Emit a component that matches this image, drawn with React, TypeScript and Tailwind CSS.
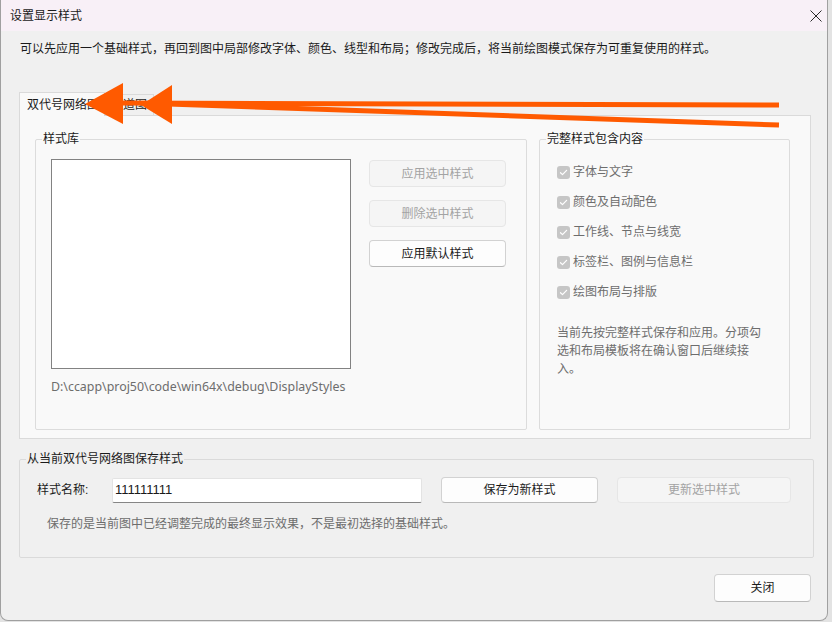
import clsx from 'clsx';

type BtnProps = {
  label: string;
  disabled?: boolean;
  className?: string;
};

function WinButton({ label, disabled, className }: BtnProps) {
  return (
    <button
      type="button"
      disabled={disabled}
      className={clsx(
        'flex shrink-0 items-center justify-center rounded-[4px] border text-[12px] leading-none',
        disabled
          ? 'border-[#e6e6e6] bg-[#f5f5f5] text-[#a3a3a3]'
          : 'border-[#d2d2d2] border-b-[#b9b9b9] bg-[#fdfdfd] text-[#1b1b1b]',
        className,
      )}
    >
      {label}
    </button>
  );
}

function CheckRow({ label }: { label: string }) {
  return (
    <div className="flex h-[30px] items-center gap-[3px]">
      <span className="flex h-[13px] w-[13px] items-center justify-center rounded-[3px] bg-[#c6c6c6]">
        <svg width="9" height="9" viewBox="0 0 9 9" fill="none">
          <path d="M1.5 4.7 3.5 6.6 7.6 2.3" stroke="#ffffff" strokeWidth="1.2" strokeLinecap="round" strokeLinejoin="round" />
        </svg>
      </span>
      <span className="text-[12px] leading-[16px] text-[#6d6d6d]">{label}</span>
    </div>
  );
}

const checks = ['字体与文字', '颜色及自动配色', '工作线、节点与线宽', '标签栏、图例与信息栏', '绘图布局与排版'];

export default function App() {
  return (
    <div className="relative h-[622px] w-[832px] overflow-hidden bg-[#e3e3e3] font-['Liberation_Sans','Noto_Sans_CJK_SC',sans-serif] text-[#1a1a1a]">
      <div className="flex h-[621px] w-[828px] flex-col overflow-hidden rounded-b-[8px] border-x border-b border-[#a0a0a0] bg-[#f0f0f0]">
        {/* title bar */}
        <div className="flex h-[31px] shrink-0 items-center justify-between bg-[#f8f0f7] pl-[9px] pr-[5px]">
          <span className="text-[12px] leading-[16px]">设置显示样式</span>
          <svg width="12" height="12" viewBox="0 0 12 12" fill="none">
            <path d="M0.5 0.5 11.5 11.5M11.5 0.5 0.5 11.5" stroke="#2a2a2a" strokeWidth="1" />
          </svg>
        </div>

        <div className="flex flex-col pl-[18px]">
          <p className="ml-px mt-[9px] text-[12px] leading-[18px]">
            可以先应用一个基础样式，再回到图中局部修改字体、颜色、线型和布局；修改完成后，将当前绘图模式保存为可重复使用的样式。
          </p>

          {/* tabs */}
          <div className="relative z-10 -mb-px mt-[34px] flex h-[24px] items-end">
            <div className="flex h-[24px] items-center border border-b-0 border-[#dadada] bg-[#f9f9f9] pl-[7px] pr-[5px] text-[12px] leading-[16px]">
              双代号网络图
            </div>
            <div className="flex h-[22px] items-center border border-l-0 border-[#dadada] bg-[#f0f0f0] px-[6px] text-[12px] leading-[16px]">
              横道图
            </div>
          </div>

          <div className="flex h-[324px] w-[792px] gap-[12px] border border-[#dadada] bg-[#f9f9f9] pl-[15px] pt-[15px]">
            <fieldset className="h-[299px] w-[492px] rounded-[2px] border border-[#dcdcdc]">
              <legend className="ml-[6px] px-px text-[12px] leading-[16px]">样式库</legend>
              <div className="flex pl-[15px] pt-[12px]">
                <div className="h-[210px] w-[300px] border border-[#828282] bg-white" />
                <div className="ml-[18px] flex flex-col gap-[13px] pt-px">
                  <WinButton label="应用选中样式" disabled className="h-[27px] w-[137px]" />
                  <WinButton label="删除选中样式" disabled className="h-[27px] w-[137px]" />
                  <WinButton label="应用默认样式" className="h-[27px] w-[137px]" />
                </div>
              </div>
              <p className="mt-[9px] pl-[15px] font-['Noto_Sans','Noto_Sans_CJK_SC',sans-serif] text-[12.4px] leading-[18px] text-[#6d6d6d]">
                D:\ccapp\proj50\code\win64x\debug\DisplayStyles
              </p>
            </fieldset>

            <fieldset className="h-[299px] w-[251px] rounded-[2px] border border-[#dcdcdc]">
              <legend className="ml-[6px] px-px text-[12px] leading-[16px]">完整样式包含内容</legend>
              <div className="flex flex-col pl-[17px] pt-[10px]">
                {checks.map((c) => (
                  <CheckRow key={c} label={c} />
                ))}
                <p className="mt-[17px] w-[208px] text-[12px] leading-[18px] text-[#6d6d6d]">
                  当前先按完整样式保存和应用。分项勾选和布局模板将在确认窗口后继续接入。
                </p>
              </div>
            </fieldset>
          </div>

          {/* save group */}
          <fieldset className="mt-[12px] h-[107px] w-[795px] rounded-[2px] border border-[#dadada]">
            <legend className="ml-[6px] px-px text-[12px] leading-[16px]">从当前双代号网络图保存样式</legend>
            <div className="flex items-center pl-[17px] pt-[10px]">
              <span className="w-[75px] text-[12px] leading-[16px]">样式名称:</span>
              <div className="flex h-[25px] w-[310px] items-center rounded-[2px] border border-[#e3e3e3] border-b-[#868686] bg-white pl-[2px] text-[13px] text-[#1a1a1a]">
                111111111
              </div>
              <WinButton label="保存为新样式" className="ml-[19px] h-[26px] w-[157px]" />
              <WinButton label="更新选中样式" disabled className="ml-[19px] h-[26px] w-[174px]" />
            </div>
            <p className="mt-[12px] pl-[27px] text-[12px] leading-[18px] text-[#6d6d6d]">
              保存的是当前图中已经调整完成的最终显示效果，不是最初选择的基础样式。
            </p>
          </fieldset>

          <WinButton label="关闭" className="mr-[16px] mt-[16px] h-[28px] w-[97px] self-end" />
        </div>
      </div>

      {/* annotation arrows */}
      <svg className="pointer-events-none absolute left-0 top-0 z-20" width="832" height="622" viewBox="0 0 832 622">
        <line x1="779" y1="105" x2="118" y2="103" stroke="#ff5a00" strokeWidth="5" />
        <line x1="779" y1="125" x2="168" y2="104" stroke="#ff5a00" strokeWidth="5" />
        <polygon points="85,104 123,83 123,124" fill="#ff5a00" />
        <polygon points="141,105 172,85 172,124" fill="#ff5a00" />
      </svg>
    </div>
  );
}
